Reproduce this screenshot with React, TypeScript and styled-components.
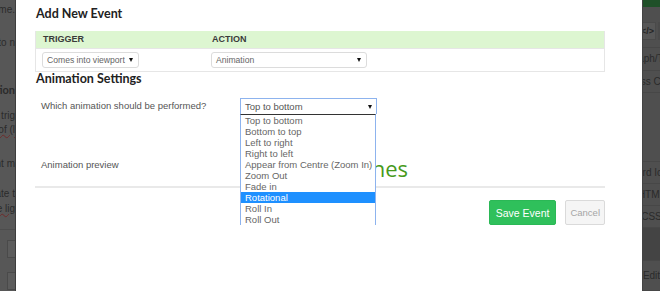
import styled, { createGlobalStyle } from 'styled-components';

const GlobalStyle = createGlobalStyle`
  html, body { margin: 0; padding: 0; }
  body {
    background: #535353;
    font-family: 'Liberation Sans', Arial, sans-serif;
    overflow: hidden;
  }
  * { box-sizing: border-box; }
`;

const Backdrop = styled.div`
  display: flex;
  width: 660px;
  height: 291px;
  overflow: hidden;
`;

/* dimmed page behind the modal, left side */
const PagePeek = styled.div`
  width: 16px;
  flex: none;
  background: #575757;
  overflow: hidden;
  display: flex;
  flex-direction: column;
  align-items: flex-end;
  color: #2b2b2b;
  border-right: 1px solid #3e3e3e;
`;

const PeekLine = styled.div<{ $gap: number; $bold?: boolean; $typo?: boolean }>`
  margin-top: ${(p) => p.$gap}px;
  white-space: nowrap;
  font-size: ${(p) => (p.$bold ? 11 : 10)}px;
  line-height: 12px;
  font-weight: ${(p) => (p.$bold ? 700 : 400)};
  font-family: ${(p) => (p.$bold ? 'Lato, sans-serif' : "'Liberation Sans', Arial, sans-serif")};
  text-decoration: ${(p) => (p.$typo ? 'underline wavy #6e2a2a' : 'none')};
`;

const PeekPanel = styled.div`
  margin-top: 14px;
  align-self: stretch;
  flex: 1;
  border-top: 1px solid #4d4d4d;
  display: flex;
  flex-direction: column;
  align-items: flex-end;
  padding-top: 10px;
  gap: 14px;
`;

const PeekBox = styled.div`
  width: 8px;
  height: 18px;
  border: 1px solid #4a4a4a;
  border-right: none;
  background: #5c5c5c;
`;

/* dimmed editor sidebar, right side */
const SidePeek = styled.div`
  flex: 1;
  background: #4f4f4f;
  overflow: hidden;
  display: flex;
  flex-direction: column;
  color: #2a2a2a;
  font-size: 10px;
  border-left: 1px solid #444;
`;

const GreenBar = styled.div`
  height: 7px;
  background: #1f5028;
`;

const ToolRow = styled.div`
  height: 41px;
  display: flex;
  align-items: center;
  gap: 2px;
  padding-top: 8px;
  border-bottom: 1px solid #474747;
`;

const ToolButton = styled.div`
  width: 13px;
  height: 18px;
  background: #575757;
  border: 1px solid #4a4a4a;
  border-left: none;
  display: flex;
  align-items: center;
  justify-content: flex-end;
  padding-right: 1px;
  font-size: 9px;
  font-weight: 700;
  color: #252525;
  white-space: nowrap;
`;

const ToolButtonEdge = styled.div`
  flex: 1;
  height: 18px;
  background: #575757;
  border: 1px solid #4a4a4a;
`;

const SideRow = styled.div<{ $h: number; $dark?: boolean }>`
  height: ${(p) => p.$h}px;
  display: flex;
  align-items: center;
  justify-content: center;
  white-space: nowrap;
  border-bottom: 1px solid #474747;
  background: ${(p) => (p.$dark ? '#444444' : 'transparent')};
`;

const Modal = styled.div`
  width: 626px;
  flex: none;
  background: #ffffff;
  padding: 7px 37px 0 19px;
`;

const Title = styled.h2`
  margin: 0 0 10px 1px;
  font: 700 12.5px/14px Lato, sans-serif;
  color: #222;
`;

const EventTable = styled.div`
  display: grid;
  grid-template-columns: 169px 1fr;
  border: 1px solid #e6e6e6;
  border-top: none;
`;

const HeadCell = styled.div`
  background: #ddf6d1;
  height: 17px;
  padding: 0 7px;
  font: 700 9px/17px 'Liberation Sans', Arial, sans-serif;
  color: #3a3a3a;
`;

const BodyCell = styled.div`
  border-top: 1px solid #e6e6e6;
  padding: 3px 6px 3px;
`;

const SelectBox = styled.div<{ $width: number }>`
  width: ${(p) => p.$width}px;
  height: 16px;
  border: 1px solid #dcdcdc;
  border-radius: 3px;
  display: flex;
  align-items: center;
  justify-content: space-between;
  padding: 0 5px 0 4px;
  font: 8.6px/14px 'Liberation Sans', Arial, sans-serif;
  color: #666;
`;

const Caret = styled.span`
  width: 0;
  height: 0;
  border-left: 2.5px solid transparent;
  border-right: 2.5px solid transparent;
  border-top: 4px solid #111;
`;

const SectionTitle = styled.h3`
  margin: 0 0 0 1px;
  font: 700 12.5px/14px Lato, sans-serif;
  color: #222;
`;

const SettingsGrid = styled.div`
  margin-top: 12px;
  display: grid;
  grid-template-columns: 205px 1fr;
  row-gap: 40px;
`;

const FieldLabel = styled.div<{ $pad: number }>`
  padding: ${(p) => p.$pad}px 0 0 6px;
  font: 9.5px/14px 'Liberation Sans', Arial, sans-serif;
  color: #555;
`;

const SelectField = styled.div`
  position: relative;
  width: 137px;
  z-index: 2;
`;

const OpenSelect = styled.div`
  height: 16px;
  border: 1px solid #8db3ee;
  border-bottom: none;
  display: flex;
  align-items: center;
  justify-content: space-between;
  padding: 0 4px 0 4px;
  font: 9.5px/14px 'Liberation Sans', Arial, sans-serif;
  color: #555;
`;

const Listbox = styled.ul`
  position: absolute;
  top: 16px;
  left: 0;
  width: 136px;
  margin: 0;
  padding: 0;
  list-style: none;
  background: #fff;
  border-top: 1px solid #333;
  border-left: 1px solid #8db3ee;
  border-right: 1px solid #8db3ee;
`;

const Option = styled.li<{ $selected?: boolean }>`
  height: 11px;
  padding-left: 4px;
  font: 9.5px/11px 'Liberation Sans', Arial, sans-serif;
  white-space: nowrap;
  color: ${(p) => (p.$selected ? '#fff' : '#666')};
  background: ${(p) => (p.$selected ? '#1e90ff' : 'transparent')};
`;

/* the preview line is mostly hidden behind the open list; its end shows */
const PreviewText = styled.div`
  width: 168px;
  display: flex;
  justify-content: flex-end;
  overflow: hidden;
  font: 400 22px/28px 'Open Sans', sans-serif;
  color: #479a1c;
  white-space: nowrap;
`;

const Divider = styled.div`
  margin-top: 4px;
  height: 2px;
  background: #e9e9e9;
`;

const Footer = styled.div`
  display: flex;
  justify-content: flex-end;
  gap: 9px;
  margin-top: 12px;
`;

const Button = styled.button<{ $primary?: boolean }>`
  height: 25px;
  padding: 0 ${(p) => (p.$primary ? 6 : 4)}px;
  border-radius: 2px;
  border: 1px solid ${(p) => (p.$primary ? '#2bb856' : '#dadada')};
  background: ${(p) => (p.$primary ? '#2fc05b' : '#f5f5f5')};
  color: ${(p) => (p.$primary ? '#fff' : '#a5a5a5')};
  font: ${(p) => (p.$primary ? '10.5px' : '9.5px')} 'Liberation Sans', Arial, sans-serif;
  cursor: pointer;
`;

const animations = [
  'Top to bottom',
  'Bottom to top',
  'Left to right',
  'Right to left',
  'Appear from Centre (Zoom In)',
  'Zoom Out',
  'Fade in',
  'Rotational',
  'Roll In',
  'Roll Out',
];

const App: React.FC = () => {
  return (
    <>
      <GlobalStyle />
      <Backdrop>
        <PagePeek>
          <PeekLine $gap={4}>at the same time.</PeekLine>
          <PeekLine $gap={21}>is set to n</PeekLine>
          <PeekLine $gap={35} $bold>Animation</PeekLine>
          <PeekLine $gap={14}>When the trig</PeekLine>
          <PeekLine $gap={2} $typo>instead of (l</PeekLine>
          <PeekLine $gap={22}>this element m</PeekLine>
          <PeekLine $gap={18}>to animate t</PeekLine>
          <PeekLine $gap={3} $typo>use the lig</PeekLine>
          <PeekPanel>
            <PeekBox />
            <PeekBox />
          </PeekPanel>
        </PagePeek>

        <Modal>
          <Title>Add New Event</Title>
          <EventTable>
            <HeadCell>TRIGGER</HeadCell>
            <HeadCell>ACTION</HeadCell>
            <BodyCell>
              <SelectBox $width={97}>
                Comes into viewport <Caret />
              </SelectBox>
            </BodyCell>
            <BodyCell>
              <SelectBox $width={156}>
                Animation <Caret />
              </SelectBox>
            </BodyCell>
          </EventTable>

          <SectionTitle>Animation Settings</SectionTitle>
          <SettingsGrid>
            <FieldLabel $pad={1}>Which animation should be performed?</FieldLabel>
            <SelectField>
              <OpenSelect>
                Top to bottom <Caret />
              </OpenSelect>
              <Listbox>
                {animations.map((name) => (
                  <Option key={name} $selected={name === 'Rotational'}>
                    {name}
                  </Option>
                ))}
              </Listbox>
            </SelectField>

            <FieldLabel $pad={4}>Animation preview</FieldLabel>
            <PreviewText>Sample Headlines</PreviewText>
          </SettingsGrid>
          <Divider />

          <Footer>
            <Button $primary>Save Event</Button>
            <Button>Cancel</Button>
          </Footer>
        </Modal>

        <SidePeek>
          <GreenBar />
          <ToolRow>
            <ToolButton>&lt;/&gt;</ToolButton>
            <ToolButtonEdge />
          </ToolRow>
          <SideRow $h={24}>Graph/Text</SideRow>
          <SideRow $h={22}>Class Code</SideRow>
          <SideRow $h={70} />
          <SideRow $h={22}>Card Icon</SideRow>
          <SideRow $h={22}>HTML</SideRow>
          <SideRow $h={22}>CSS</SideRow>
          <SideRow $h={34} $dark />
          <SideRow $h={30}>Edit</SideRow>
        </SidePeek>
      </Backdrop>
    </>
  );
};

export default App;
